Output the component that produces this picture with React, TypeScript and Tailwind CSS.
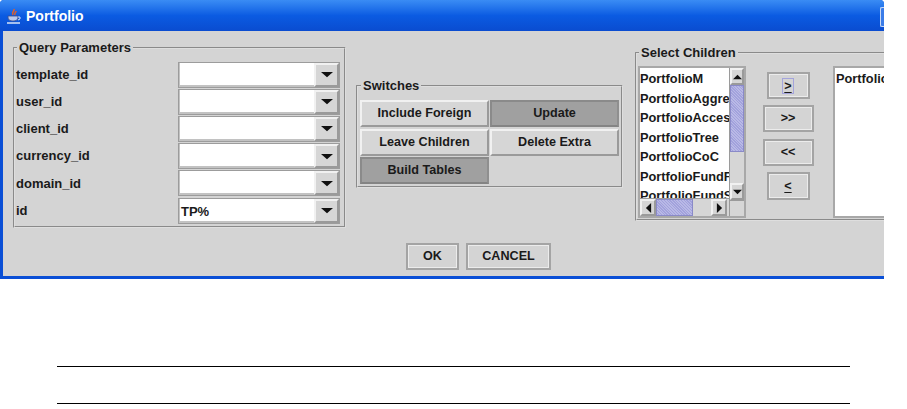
import React from 'react';

const font = { fontFamily: '"Liberation Sans", Arial, sans-serif' };

const params = [
  { name: 'template_id', value: '' },
  { name: 'user_id', value: '' },
  { name: 'client_id', value: '' },
  { name: 'currency_id', value: '' },
  { name: 'domain_id', value: '' },
  { name: 'id', value: 'TP%' },
];

const children = [
  'PortfolioM',
  'PortfolioAggre',
  'PortfolioAcces',
  'PortfolioTree',
  'PortfolioCoC',
  'PortfolioFundF',
  'PortfolioFundS',
];

const raised = 'border-2 border-t-[#f1f1f1] border-l-[#f1f1f1] border-r-[#9a9a9a] border-b-[#9a9a9a]';

function Arrow({ dir, size = 'm' }: { dir: 'up' | 'down' | 'left' | 'right'; size?: 's' | 'm' }) {
  const pts = {
    up: '0,7 5.5,1 11,7',
    down: '0,1 5.5,7 11,1',
    left: '7,0 1,5.5 7,11',
    right: '1,0 7,5.5 1,11',
  }[dir];
  const horizontal = dir === 'up' || dir === 'down';
  return (
    <svg
      width={horizontal ? (size === 's' ? 9 : 12) : 7}
      height={horizontal ? (size === 's' ? 6 : 7) : 10}
      viewBox={horizontal ? '0 0 11 8' : '0 0 8 11'}
      preserveAspectRatio="none"
    >
      <polygon points={pts} fill="#111" />
    </svg>
  );
}

function Group({ title, className, children: body }: { title: string; className: string; children: React.ReactNode }) {
  return (
    <fieldset className={`shrink-0 border-2 [border-style:groove] border-[#dedede] rounded-[1px] ${className}`}>
      <legend className="ml-[1px] px-0.5 text-[13px] leading-[15px] font-bold text-[#1a1a1a]">{title}</legend>
      {body}
    </fieldset>
  );
}

function Combo({ value }: { value: string }) {
  return (
    <div className="flex h-[26px] w-[162px] border border-[#9c9c9c]">
      <div className="flex-1 bg-white border-b-2 border-l border-[#c2c2c2] pl-[1px] text-[13px] leading-[25px] font-bold text-[#1a1a1a]">{value}</div>
      <div className={`w-[25px] flex items-center justify-center bg-[#d6d6d6] ${raised}`}>
        <Arrow dir="down" />
      </div>
    </div>
  );
}

function Toggle({ label, on }: { label: string; on?: boolean }) {
  return (
    <div
      className={`h-[27px] flex items-center justify-center text-[12.6px] font-bold text-[#1a1a1a] border-2 ${
        on
          ? 'bg-[#a0a0a0] border-t-[#8a8a8a] border-l-[#8a8a8a] border-r-[#8f8f8f] border-b-[#848484]'
          : 'bg-[#d6d6d6] border-t-[#f1f1f1] border-l-[#f1f1f1] border-r-[#9a9a9a] border-b-[#9a9a9a]'
      }`}
    >
      {label}
    </div>
  );
}

function Btn({ label, className }: { label: React.ReactNode; className: string }) {
  return (
    <div className={`flex items-center justify-center bg-[#d4d4d4] border-2 border-[#a4a4a4] shadow-[inset_1px_1px_0_#ececec,inset_-1px_-1px_0_#ececec] text-[12.6px] font-bold text-[#1a1a1a] ${className}`}>
      {label}
    </div>
  );
}

function ThumbTexture() {
  return (
    <div className="w-full h-full border border-[#8a8ac8] bg-[repeating-linear-gradient(45deg,#b9b9e6_0px,#b9b9e6_1px,#a2a2dc_1px,#a2a2dc_2px)]" />
  );
}

function JavaIcon() {
  return (
    <svg width="16" height="18" viewBox="0 0 16 18">
      <path d="M8 1c1 2-3 3-1 6M10 3c0 2-2 2-1 4" stroke="#e0602a" strokeWidth="1.5" fill="none" />
      <path d="M2 8h10v1c0 3-2 4-5 4s-5-1-5-4z" fill="#b8c8ec" stroke="#3c4c8c" strokeWidth="0.8" />
      <path d="M12 9h2v2l-2 1" stroke="#d8e4f8" fill="none" />
      <path d="M1 15h13" stroke="#d8e4f8" strokeWidth="1.5" />
    </svg>
  );
}

export default function App() {
  return (
    <div className="w-[907px] h-[409px] bg-white overflow-hidden" style={font}>
      <div className="w-[884px] h-[279px] overflow-hidden flex flex-col bg-[#0a4fd6] rounded-t-[4px]">
        {/* title bar */}
        <div className="h-[31px] shrink-0 flex items-center pl-[6px] pt-[2px] bg-gradient-to-b from-[#3a8cf4] via-[#0b5be2] to-[#0a4cd0]">
          <JavaIcon />
          <span className="ml-[4px] text-[14px] font-bold text-white">Portfolio</span>
          <div className="ml-auto w-[4px] h-[20px] rounded-l-[2px] border border-r-0 border-[#c8d8f4] bg-[#3a7ce8]" />
        </div>

        <div className="flex-1 ml-[3px] mb-[3px] bg-[#d4d4d4] flex flex-col overflow-hidden">
          <div className="flex items-start h-[207px]">
            {/* query parameters */}
            <Group title="Query Parameters" className="ml-[10px] mt-[9px] w-[333px] h-[188px] pl-[1px] pt-[6px]">
              {params.map((p) => (
                <div key={p.name} className="flex items-center h-[27.2px]">
                  <span className="w-[162px] text-[13px] font-bold text-[#1a1a1a]">{p.name}</span>
                  <Combo value={p.value} />
                </div>
              ))}
            </Group>

            {/* switches */}
            <Group title="Switches" className="ml-[10px] mt-[47px] w-[267px] h-[110px] px-[2px] pt-[7px]">
              <div className="grid grid-cols-2 gap-x-[1px] gap-y-[1.5px] w-[259px]">
                <Toggle label="Include Foreign" />
                <Toggle label="Update" on />
                <Toggle label="Leave Children" />
                <Toggle label="Delete Extra" />
                <Toggle label="Build Tables" on />
              </div>
            </Group>

            {/* select children */}
            <Group title="Select Children" className="ml-[12px] mt-[14px] w-[262px] h-[176px] pl-[1px] pt-[6px]">
              <div className="flex items-start">
                <div className="relative w-[108px] h-[152px] border-2 border-[#a8a8a8] bg-white overflow-hidden">
                  <div className="pt-[1px]">
                    {children.map((c) => (
                      <div key={c} className="h-[19.5px] leading-[19.5px] text-[12.8px] font-bold text-[#1a1a1a] whitespace-nowrap">{c}</div>
                    ))}
                  </div>
                  {/* vertical scrollbar */}
                  <div className="absolute right-0 top-0 bottom-0 w-[15px] bg-[#d6d6d6] border-l border-[#9a9a9a] flex flex-col">
                    <div className={`h-[17px] flex items-center justify-center ${raised}`}><Arrow dir="up" size="s" /></div>
                    <div className="h-[67px]"><ThumbTexture /></div>
                    <div className="h-[31px]" />
                    <div className={`h-[17px] flex items-center justify-center ${raised}`}><Arrow dir="down" size="s" /></div>
                    <div className="flex-1 border-t border-[#9a9a9a]" />
                  </div>
                  {/* horizontal scrollbar */}
                  <div className="absolute left-0 bottom-0 right-[15px] h-[18px] bg-[#d6d6d6] border-t border-[#9a9a9a] flex">
                    <div className={`w-[16px] flex items-center justify-center ${raised}`}><Arrow dir="left" /></div>
                    <div className="w-[37px]"><ThumbTexture /></div>
                    <div className="w-[18px]" />
                    <div className={`w-[16px] flex items-center justify-center ${raised}`}><Arrow dir="right" /></div>
                  </div>
                </div>

                <div className="w-[84px] ml-0 mr-[3px] flex flex-col items-center pt-[6px]">
                  <Btn className="w-[43px] h-[27px] underline underline-offset-2" label={<span className="outline outline-1 outline-[#a4a4dc] px-[1px] leading-[14px]">&gt;</span>} />
                  <Btn className="w-[51px] h-[27px] mt-[6px]" label="&gt;&gt;" />
                  <Btn className="w-[51px] h-[27px] mt-[7px]" label="&lt;&lt;" />
                  <Btn className="w-[43px] h-[28px] mt-[6px] underline underline-offset-2" label="&lt;" />
                </div>

                <div className="w-[80px] h-[152px] border-2 border-r-0 border-[#a8a8a8] bg-white pl-[1px] pt-[1px] overflow-hidden">
                  <div className="h-[19.5px] leading-[19.5px] text-[12.8px] font-bold text-[#1a1a1a]">Portfolio</div>
                </div>
              </div>
            </Group>
          </div>

          {/* dialog buttons */}
          <div className="flex gap-[7px] mt-[5px] ml-[403px]">
            <Btn className="w-[53px] h-[27px]" label="OK" />
            <Btn className="w-[85px] h-[27px]" label="CANCEL" />
          </div>
        </div>
      </div>

      <div className="ml-[57px] w-[793px] mt-[87px] border-t border-black" />
      <div className="ml-[57px] w-[793px] mt-[36px] border-t border-black" />
    </div>
  );
}
